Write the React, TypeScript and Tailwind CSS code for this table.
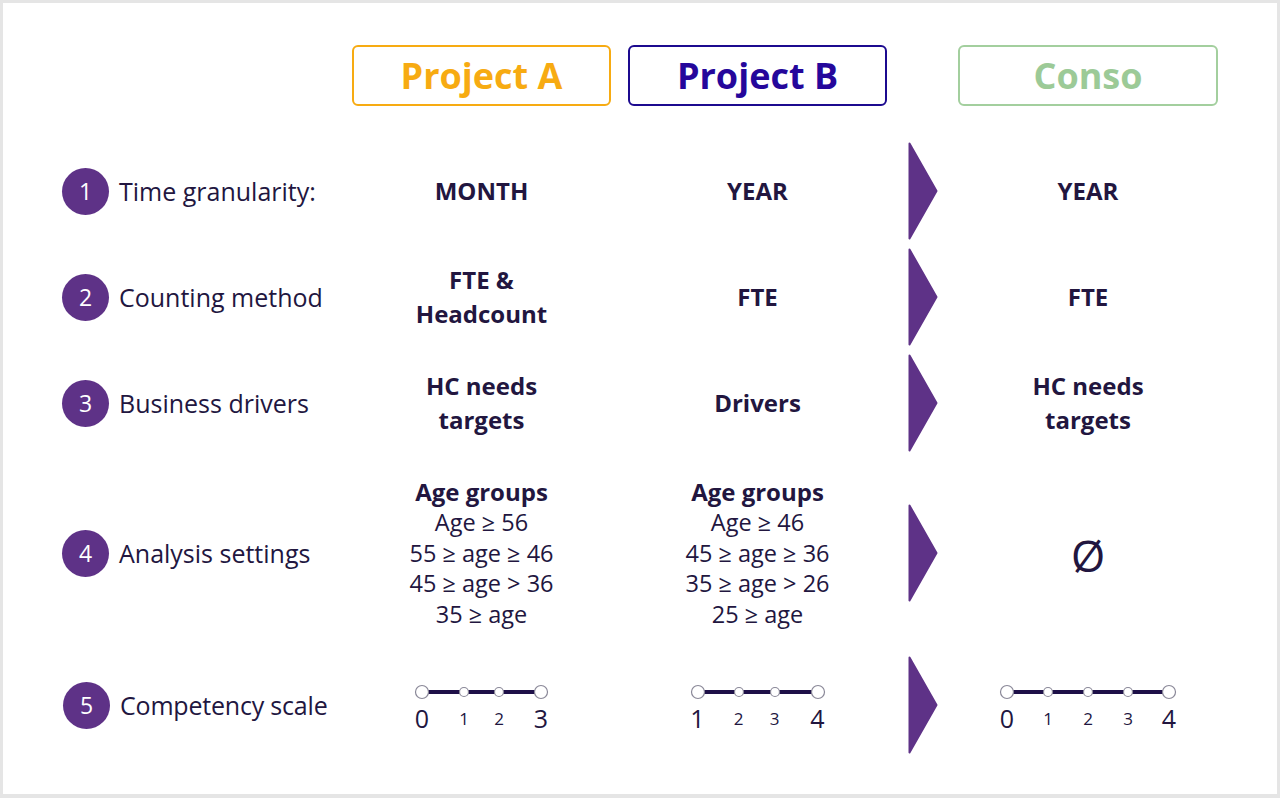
import React from 'react';

type Row = {
  n: number;
  label: string;
  h: string;
  a: React.ReactNode;
  b: React.ReactNode;
  c: React.ReactNode;
};

const font = { fontFamily: '"Open Sans", "Noto Sans", sans-serif' };

const Arrow = () => (
  <svg width="30" height="98" viewBox="0 0 30 98" className="block">
    <path d="M1.5 1.5 L28.5 49 L1.5 96.5 Z" fill="#5e3287" stroke="#5e3287" strokeWidth="2" strokeLinejoin="round" />
  </svg>
);

const Bold = ({ children }: { children: React.ReactNode }) => (
  <div className="text-[24px] font-bold leading-[34px] text-center text-[#22163f]">{children}</div>
);

const AgeGroups = ({ lines }: { lines: string[] }) => (
  <div className="flex flex-col items-center text-[#22163f] text-center">
    <div className="text-[24px] font-bold leading-[30px]">Age groups</div>
    {lines.map((l) => (
      <div key={l} className="text-[23.5px] leading-[30.5px]">{l}</div>
    ))}
  </div>
);

// positions are offsets from the left of the scale
const Scale = ({ points }: { points: { x: number; label: string; big: boolean }[] }) => {
  const w = points[points.length - 1].x + 16;
  return (
    <div className="relative h-[46px]" style={{ width: w }}>
      <svg width={w} height="20" className="absolute left-0 top-0">
        <line x1={points[0].x + 8} y1="10" x2={points[points.length - 1].x + 8} y2="10" stroke="#1e1048" strokeWidth="4" />
        {points.map((p) => (
          <circle key={p.x} cx={p.x + 8} cy="10" r={p.big ? 6.5 : 4.5} fill="#fff" stroke="#8a8898" strokeWidth="1.2" />
        ))}
      </svg>
      {points.map((p) => (
        <span
          key={p.label + p.x}
          className={`absolute -translate-x-1/2 text-[#22163f] leading-none ${p.big ? 'text-[25px] top-[24px]' : 'text-[17px] top-[28px]'}`}
          style={{ left: p.x + 8 }}
        >
          {p.label}
        </span>
      ))}
    </div>
  );
};

const rows: Row[] = [
  { n: 1, label: 'Time granularity:', h: 'h-[106px]', a: <Bold>MONTH</Bold>, b: <Bold>YEAR</Bold>, c: <Bold>YEAR</Bold> },
  {
    n: 2,
    label: 'Counting method',
    h: 'h-[106px]',
    a: <Bold>FTE &amp;<br />Headcount</Bold>,
    b: <Bold>FTE</Bold>,
    c: <Bold>FTE</Bold>,
  },
  {
    n: 3,
    label: 'Business drivers',
    h: 'h-[106px]',
    a: <Bold>HC needs<br />targets</Bold>,
    b: <Bold>Drivers</Bold>,
    c: <Bold>HC needs<br />targets</Bold>,
  },
  {
    n: 4,
    label: 'Analysis settings',
    h: 'h-[194px]',
    a: <AgeGroups lines={['Age ≥ 56', '55 ≥ age ≥ 46', '45 ≥ age > 36', '35 ≥ age']} />,
    b: <AgeGroups lines={['Age ≥ 46', '45 ≥ age ≥ 36', '35 ≥ age > 26', '25 ≥ age']} />,
    c: <div className="text-[44px] leading-none text-[#22163f] pt-[4px]">Ø</div>,
  },
  {
    n: 5,
    label: 'Competency scale',
    h: 'h-[110px]',
    a: (
      <Scale
        points={[
          { x: 0, label: '0', big: true },
          { x: 42, label: '1', big: false },
          { x: 77, label: '2', big: false },
          { x: 119, label: '3', big: true },
        ]}
      />
    ),
    b: (
      <Scale
        points={[
          { x: 0, label: '1', big: true },
          { x: 41, label: '2', big: false },
          { x: 77, label: '3', big: false },
          { x: 120, label: '4', big: true },
        ]}
      />
    ),
    c: (
      <Scale
        points={[
          { x: 0, label: '0', big: true },
          { x: 41, label: '1', big: false },
          { x: 81, label: '2', big: false },
          { x: 121, label: '3', big: false },
          { x: 162, label: '4', big: true },
        ]}
      />
    ),
  },
];

const Header = ({ text, cls }: { text: string; cls: string }) => (
  <div className={`h-[61px] rounded-[6px] border-[2.5px] flex items-center justify-center text-[36px] font-bold leading-none ${cls}`}>
    <span className="mt-[1px]">{text}</span>
  </div>
);

export default function App() {
  return (
    <div className="w-full h-[798px] bg-[#e5e5e5] pl-[3px] pt-[3px] pr-[3px] pb-[4px]" style={font}>
      <div className="w-full h-full bg-white">
        {/* Header */}
        <div className="grid grid-cols-[349px_259px_17px_259px_71px_260px] pt-[42px]">
          <div />
          <Header text="Project A" cls="border-[#f7ab12] text-[#f7ab12]" />
          <div />
          <Header text="Project B" cls="border-[#1c0a8f] text-[#25079b]" />
          <div />
          <Header text="Conso" cls="border-[#a3cf9e] text-[#9cca97]" />
        </div>

        {/* Rows */}
        <div className="flex flex-col pt-[32px]">
          {rows.map((r) => (
            <div key={r.n} className={`grid grid-cols-[349px_259px_17px_259px_71px_260px] items-center ${r.h}`}>
              <div className={`flex items-center gap-[10px] ${r.n === 5 ? 'pl-[60px]' : 'pl-[59px]'}`}>
                <div className="w-[47px] h-[47px] rounded-full bg-[#5e3287] flex items-center justify-center text-white text-[23px] leading-none">
                  {r.n}
                </div>
                <div className={`text-[25px] text-[#22163f] leading-none ${r.n === 5 ? 'tracking-[-0.2px]' : ''}`}>{r.label}</div>
              </div>
              <div className="flex justify-center">{r.a}</div>
              <div />
              <div className="flex justify-center">{r.b}</div>
              <div className="flex justify-start pl-[21px]">
                <Arrow />
              </div>
              <div className="flex justify-center">{r.c}</div>
            </div>
          ))}
        </div>
      </div>
    </div>
  );
}
